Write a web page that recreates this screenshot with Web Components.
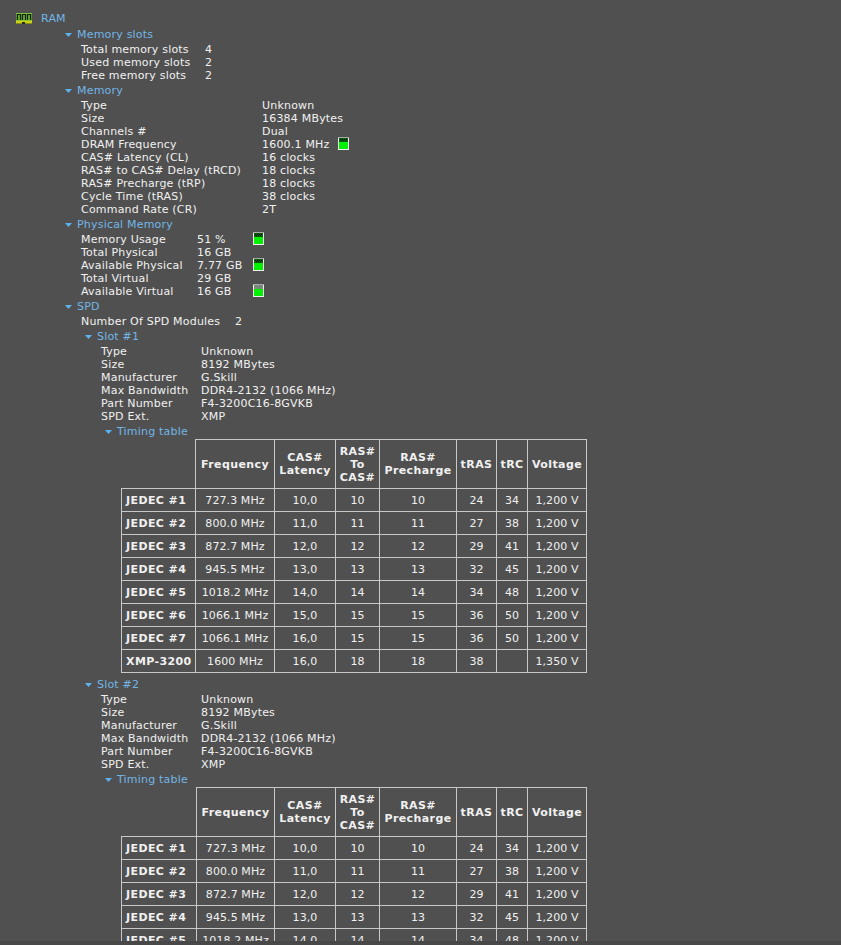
<!DOCTYPE html>
<html>
<head>
<meta charset="utf-8">
<title>RAM</title>
<style>
    html, body {
        margin: 0;
        height: 100%;
        background-color: #484848;
        overflow: hidden;
    }
</style>
</head>
<body>
<ram-report>
    <tree-node root label="RAM">
        <tree-node label="Memory slots">
            <info-list style="--key: 124px">
                <info-row label="Total memory slots" value="4"></info-row>
                <info-row label="Used memory slots" value="2"></info-row>
                <info-row label="Free memory slots" value="2"></info-row>
            </info-list>
        </tree-node>
        <tree-node label="Memory">
            <info-list style="--key: 181px; --meter: 76px">
                <info-row label="Type" value="Unknown"></info-row>
                <info-row label="Size" value="16384 MBytes"></info-row>
                <info-row label="Channels #" value="Dual"></info-row>
                <info-row label="DRAM Frequency" value="1600.1 MHz" meter="1"></info-row>
                <info-row label="CAS# Latency (CL)" value="16 clocks"></info-row>
                <info-row label="RAS# to CAS# Delay (tRCD)" value="18 clocks"></info-row>
                <info-row label="RAS# Precharge (tRP)" value="18 clocks"></info-row>
                <info-row label="Cycle Time (tRAS)" value="38 clocks"></info-row>
                <info-row label="Command Rate (CR)" value="2T"></info-row>
            </info-list>
        </tree-node>
        <tree-node label="Physical Memory">
            <info-list style="--key: 116px; --meter: 56px">
                <info-row label="Memory Usage" value="51 %" meter="1"></info-row>
                <info-row label="Total Physical" value="16 GB"></info-row>
                <info-row label="Available Physical" value="7.77 GB" meter="1"></info-row>
                <info-row label="Total Virtual" value="29 GB"></info-row>
                <info-row label="Available Virtual" value="16 GB" meter="2"></info-row>
            </info-list>
        </tree-node>
        <tree-node label="SPD">
            <info-list style="--key: 154px">
                <info-row label="Number Of SPD Modules" value="2"></info-row>
            </info-list>
            <tree-node label="Slot #1">
                <info-list style="--key: 100px">
                    <info-row label="Type" value="Unknown"></info-row>
                    <info-row label="Size" value="8192 MBytes"></info-row>
                    <info-row label="Manufacturer" value="G.Skill"></info-row>
                    <info-row label="Max Bandwidth" value="DDR4-2132 (1066 MHz)"></info-row>
                    <info-row label="Part Number" value="F4-3200C16-8GVKB"></info-row>
                    <info-row label="SPD Ext." value="XMP"></info-row>
                </info-list>
                <tree-node label="Timing table">
                    <timing-table cols="74,79,61,44,77,40,31,59"></timing-table>
                </tree-node>
            </tree-node>
            <tree-node label="Slot #2">
                <info-list style="--key: 100px">
                    <info-row label="Type" value="Unknown"></info-row>
                    <info-row label="Size" value="8192 MBytes"></info-row>
                    <info-row label="Manufacturer" value="G.Skill"></info-row>
                    <info-row label="Max Bandwidth" value="DDR4-2132 (1066 MHz)"></info-row>
                    <info-row label="Part Number" value="F4-3200C16-8GVKB"></info-row>
                    <info-row label="SPD Ext." value="XMP"></info-row>
                </info-list>
                <tree-node label="Timing table">
                    <timing-table cols="75,78,61,44,77,40,31,59"></timing-table>
                </tree-node>
            </tree-node>
        </tree-node>
    </tree-node>
</ram-report>

<script>
const RAM_ICON = `
    <svg width="16" height="11" viewBox="0 0 16 11" shape-rendering="crispEdges">
        <rect width="16" height="8" fill="#4f8f22"/>
        <rect width="16" height="1" fill="#7fbf3f"/>
        <rect x="1" y="1" width="4" height="6" fill="#18240c"/>
        <rect x="6" y="1" width="4" height="6" fill="#18240c"/>
        <rect x="11" y="1" width="4" height="6" fill="#18240c"/>
        <rect x="2" y="2" width="2" height="5" fill="#5f9f2c"/>
        <rect x="7" y="2" width="2" height="5" fill="#5f9f2c"/>
        <rect x="12" y="2" width="2" height="5" fill="#5f9f2c"/>
        <rect y="7" width="16" height="1" fill="#8cc820"/>
        <rect y="8" width="16" height="2" fill="#c8d018"/>
        <rect y="10" width="16" height="1" fill="#8a8a18"/>
        <rect x="6" y="9" width="3" height="2" fill="#2a2a14"/>
    </svg>
`;

const ARROW = `
    <svg width="7" height="4" viewBox="0 0 7 4">
        <polygon points="0,0 7,0 3.5,4" fill="#5cb4ee"/>
    </svg>
`;

class RamReport extends HTMLElement {
    constructor() {
        super();
        this.attachShadow({ mode: "open" });
    }

    connectedCallback() {
        this.shadowRoot.innerHTML = `
            <style>
                :host {
                    display: block;
                    height: 941px;
                    box-sizing: border-box;
                    padding: 10px 0 0 16px;
                    overflow: hidden;
                    background-color: #505050;
                    color: #f0f0f0;
                    font: 11px/13px "DejaVu Sans", Verdana, sans-serif;
                    letter-spacing: 0.2px;
                }
            </style>
            <slot></slot>
        `;
    }
}

class TreeNode extends HTMLElement {
    constructor() {
        super();
        this.attachShadow({ mode: "open" });
    }

    connectedCallback() {
        const root = this.hasAttribute("root");
        this.shadowRoot.innerHTML = `
            <style>
                :host {
                    display: block;
                    margin-left: 4px;
                }
                :host([root]) {
                    margin-left: 0;
                }
                .head {
                    display: flex;
                    align-items: center;
                    gap: 5px;
                    height: 17px;
                    color: #72b6e6;
                }
                .root-head {
                    gap: 9px;
                    height: 16px;
                }
                .kids {
                    padding-left: 16px;
                }
                .root-kids {
                    padding-left: 45px;
                }
            </style>
            <div class="head ${root ? "root-head" : ""}">
                ${root ? RAM_ICON : ARROW}
                <span>${this.getAttribute("label")}</span>
            </div>
            <div class="kids ${root ? "root-kids" : ""}">
                <slot></slot>
            </div>
        `;
    }
}

class InfoList extends HTMLElement {
    constructor() {
        super();
        this.attachShadow({ mode: "open" });
    }

    connectedCallback() {
        this.shadowRoot.innerHTML = `
            <style>
                :host {
                    display: block;
                }
            </style>
            <slot></slot>
        `;
    }
}

class InfoRow extends HTMLElement {
    constructor() {
        super();
        this.attachShadow({ mode: "open" });
    }

    connectedCallback() {
        const meter = this.getAttribute("meter");
        this.shadowRoot.innerHTML = `
            <style>
                :host {
                    display: flex;
                    height: 13px;
                    white-space: nowrap;
                }
                .key {
                    flex: 0 0 var(--key);
                }
                .val {
                    flex: 0 0 var(--meter, auto);
                }
                level-meter {
                    margin-top: -1px;
                }
            </style>
            <span class="key">${this.getAttribute("label")}</span>
            <span class="val">${this.getAttribute("value")}</span>
            ${meter ? `<level-meter kind="${meter}"></level-meter>` : ""}
        `;
    }
}

class LevelMeter extends HTMLElement {
    constructor() {
        super();
        this.attachShadow({ mode: "open" });
    }

    connectedCallback() {
        const full = this.getAttribute("kind") === "2";
        this.shadowRoot.innerHTML = `
            <style>
                :host {
                    display: block;
                    width: 11px;
                    height: 13px;
                }
                svg {
                    display: block;
                }
            </style>
            <svg width="11" height="13" viewBox="0 0 11 13" shape-rendering="crispEdges">
                <rect width="11" height="13" fill="#f0f0f0"/>
                <rect width="11" height="1" fill="#a8a8a8"/>
                <rect x="1" y="1" width="9" height="11" fill="#00f000"/>
                <rect x="1" y="1" width="9" height="4" fill="${full ? "#7a8a7a" : "#0a5a0a"}"/>
                ${full ? "" : `<path d="M2 2h1v1h-1zM4 2h1v1h-1zM6 2h1v1h-1zM8 2h1v1h-1zM3 3h1v1h-1zM5 3h1v1h-1zM7 3h1v1h-1z" fill="#022"/>`}
            </svg>
        `;
    }
}

const TIMING_HEAD = ["Frequency", "CAS#<br>Latency", "RAS#<br>To<br>CAS#", "RAS#<br>Precharge", "tRAS", "tRC", "Voltage"];
const TIMING_ROWS = [
    ["JEDEC #1", "727.3 MHz", "10,0", "10", "10", "24", "34", "1,200 V"],
    ["JEDEC #2", "800.0 MHz", "11,0", "11", "11", "27", "38", "1,200 V"],
    ["JEDEC #3", "872.7 MHz", "12,0", "12", "12", "29", "41", "1,200 V"],
    ["JEDEC #4", "945.5 MHz", "13,0", "13", "13", "32", "45", "1,200 V"],
    ["JEDEC #5", "1018.2 MHz", "14,0", "14", "14", "34", "48", "1,200 V"],
    ["JEDEC #6", "1066.1 MHz", "15,0", "15", "15", "36", "50", "1,200 V"],
    ["JEDEC #7", "1066.1 MHz", "16,0", "15", "15", "36", "50", "1,200 V"],
    ["XMP-3200", "1600 MHz", "16,0", "18", "18", "38", "", "1,350 V"],
];

class TimingTable extends HTMLElement {
    constructor() {
        super();
        this.attachShadow({ mode: "open" });
    }

    connectedCallback() {
        const cols = this.getAttribute("cols").split(",");
        const total = cols.reduce((sum, w) => sum + Number(w), 0);
        this.shadowRoot.innerHTML = `
            <style>
                :host {
                    display: block;
                    margin: -1px 0 3px;
                }
                table {
                    border-collapse: collapse;
                    table-layout: fixed;
                    width: ${total + 1}px;
                }
                th, td {
                    border: 1px solid #c8c8c8;
                    padding: 0;
                    text-align: center;
                    font-size: 11px;
                    line-height: 13px;
                    white-space: nowrap;
                    letter-spacing: 0.1px;
                }
                th {
                    letter-spacing: 0.4px;
                }
                thead tr {
                    height: 49px;
                }
                tbody tr {
                    height: 23px;
                }
                thead th:first-child {
                    border-top: 0;
                    border-left: 0;
                }
                tbody th {
                    text-align: left;
                    padding-left: 4px;
                }
            </style>
            <table>
                <colgroup>${cols.map((w) => `<col style="width: ${w}px">`).join("")}</colgroup>
                <thead>
                    <tr><th></th>${TIMING_HEAD.map((h) => `<th>${h}</th>`).join("")}</tr>
                </thead>
                <tbody>
                    ${TIMING_ROWS.map((r) => `
                        <tr><th>${r[0]}</th>${r.slice(1).map((c) => `<td>${c}</td>`).join("")}</tr>
                    `).join("")}
                </tbody>
            </table>
        `;
    }
}

customElements.define("ram-report", RamReport);
customElements.define("tree-node", TreeNode);
customElements.define("info-list", InfoList);
customElements.define("info-row", InfoRow);
customElements.define("level-meter", LevelMeter);
customElements.define("timing-table", TimingTable);
</script>
</body>
</html>
